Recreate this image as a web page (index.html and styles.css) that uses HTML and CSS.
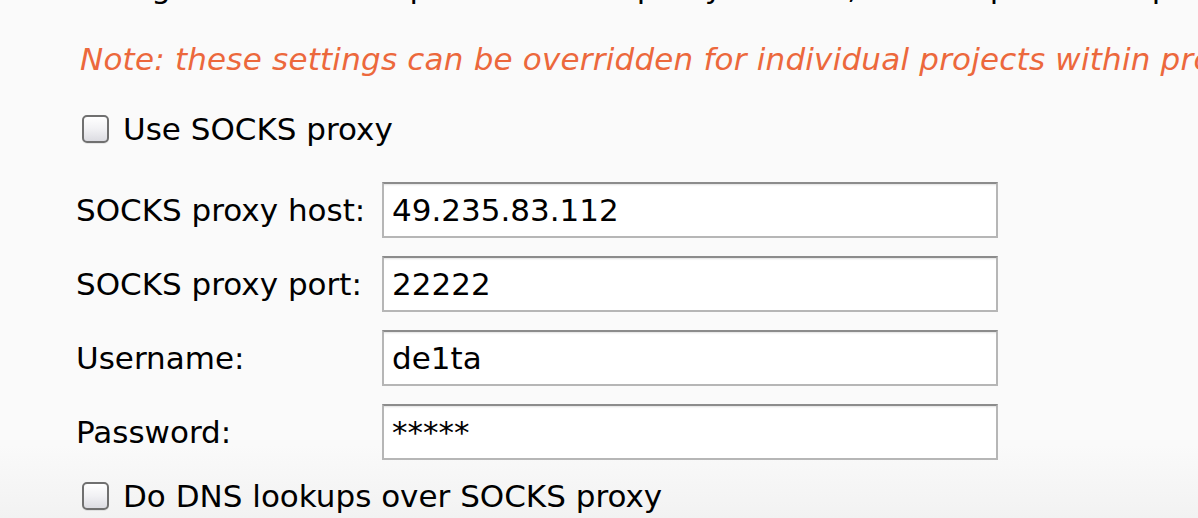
FILE: index.html
```html
<!DOCTYPE html>
<html>
<head>
<meta charset="utf-8">
<link rel="stylesheet" href="styles.css">
</head>
<body>
<div class="panel">
  <p class="intro">configured rules for upstream HTTP proxy servers, then requests to upstream proxies will be sent via the SOCKS proxy</p>
  <p class="note">Note: these settings can be overridden for individual projects within project options.</p>
  <label class="check-row check-top">
    <span class="checkbox"></span>
    <span class="check-text">Use SOCKS proxy</span>
  </label>
  <div class="form">
    <span class="label">SOCKS proxy host:</span>
    <div class="field">49.235.83.112</div>
    <span class="label">SOCKS proxy port:</span>
    <div class="field">22222</div>
    <span class="label">Username:</span>
    <div class="field">de1ta</div>
    <span class="label">Password:</span>
    <div class="field">*****</div>
  </div>
  <label class="check-row check-bottom">
    <span class="checkbox"></span>
    <span class="check-text">Do DNS lookups over SOCKS proxy</span>
  </label>
</div>
</body>
</html>
```
FILE: styles.css
```css
html, body {
  margin: 0;
  padding: 0;
}
body {
  width: 1198px;
  height: 518px;
  overflow: hidden;
  background: linear-gradient(to bottom, #fafafa 0%, #fafafa 86%, #f2f2f2 100%);
  font-family: "DejaVu Sans", "Liberation Sans", sans-serif;
  font-size: 31px;
  line-height: 36px;
  color: #000;
}
.panel {
  padding-left: 76px;
  overflow: hidden;
}
.intro {
  margin: -31px 0 0 0;
  height: 36px;
  white-space: nowrap;
  overflow: hidden;
}
.note {
  margin: 36px 0 0 0;
  padding-left: 4px;
  height: 36px;
  white-space: nowrap;
  overflow: hidden;
  font-style: italic;
  letter-spacing: 0.2px;
  color: #ec683c;
}
.check-row {
  display: flex;
  align-items: center;
  height: 36px;
  white-space: nowrap;
}
.check-top {
  margin-top: 34px;
}
.check-bottom {
  margin-top: 18px;
}
.checkbox {
  box-sizing: border-box;
  width: 27px;
  height: 28px;
  margin-left: 6px;
  margin-right: 14px;
  border: 2px solid #707070;
  border-radius: 5px;
  background: linear-gradient(to bottom, #ffffff 0%, #f1f1f4 50%, #dcdce2 100%);
  box-shadow: 0 1px 0 rgba(0,0,0,0.08);
}
.form {
  margin-top: 35px;
  display: grid;
  grid-template-columns: 306px 616px;
  grid-auto-rows: 56px;
  row-gap: 18px;
  align-items: center;
}
.label {
  white-space: nowrap;
}
.field {
  box-sizing: border-box;
  height: 56px;
  border: 2px solid #b6b6b6;
  border-top-color: #8c8c8c;
  background: #fff;
  box-shadow: inset 0 3px 2px -2px rgba(0,0,0,0.12);
  padding: 8px 8px 0 8px;
  line-height: 36px;
}
```
